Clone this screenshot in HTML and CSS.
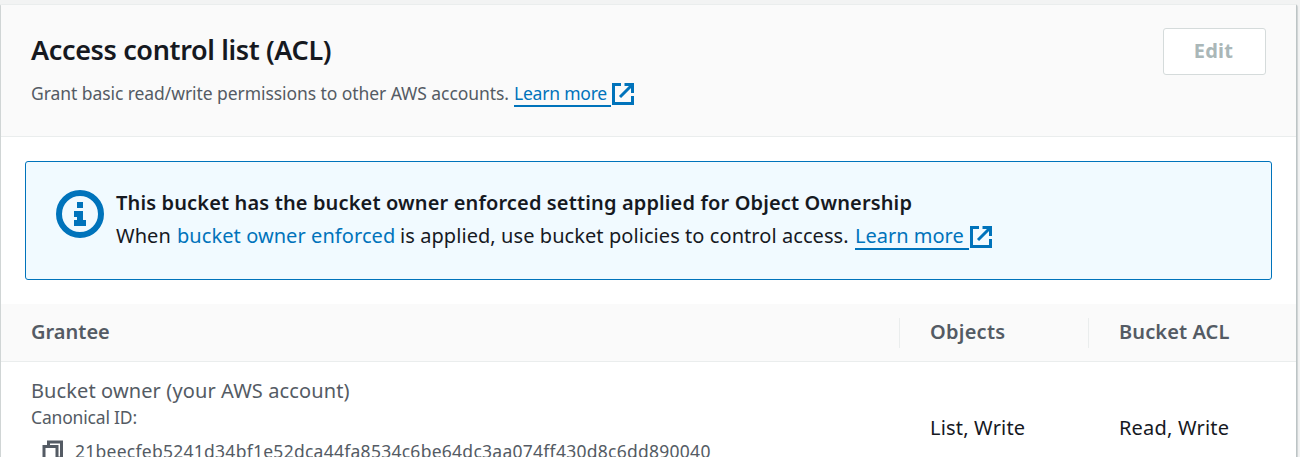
FILE: index.html
```html
<!DOCTYPE html>
<html lang="en">
<head>
<meta charset="utf-8">
<title>Access control list</title>
<link rel="stylesheet" href="styles.css">
</head>
<body>
<main class="panel">
  <header class="panel-header">
    <div>
      <h2 class="title">Access control list (ACL)</h2>
      <p class="description"><span class="description-text">Grant basic read/write permissions to other AWS accounts.</span><a class="link link-small"><span class="link-text">Learn more</span><svg class="external" viewBox="0 0 22 22"><path d="M9 1.5H1.5v19h19V13M12.5 1.5h8V10M20 2 8 14"/></svg></a></p>
    </div>
    <button class="edit" disabled>Edit</button>
  </header>
  <section class="alert">
    <svg class="info" viewBox="0 0 48 48"><circle cx="24" cy="24" r="21"/><path d="M21 12h6v6h-6zM18 21h9v9h3v6H18v-6h3v-3h-3z"/></svg>
    <div>
      <div class="alert-title">This bucket has the bucket owner enforced setting applied for Object Ownership</div>
      <div class="alert-body"><span class="seg-when">When</span><a class="plain-link">bucket owner enforced</a><span class="seg-policy">is applied, use bucket policies to control access.</span><a class="link link-large"><span class="link-text">Learn more</span><svg class="external" viewBox="0 0 22 22"><path d="M9 1.5H1.5v19h19V13M12.5 1.5h8V10M20 2 8 14"/></svg></a></div>
    </div>
  </section>
  <section class="table">
    <div class="row head">
      <div class="cell">Grantee</div>
      <div class="cell divided objects">Objects</div>
      <div class="cell divided acl">Bucket ACL</div>
    </div>
    <div class="row">
      <div class="cell grantee">
        <div class="owner">Bucket owner (your AWS account)</div>
        <div class="canonical">Canonical ID:</div>
        <div class="id-line"><svg class="copy" viewBox="0 0 22 24"><path d="M6.5 5V2h13v16h-4"/><path d="M2 6.5h13V22H2z"/></svg><span class="id">21beecfeb5241d34bf1e52dca44fa8534c6be64dc3aa074ff430d8c6dd890040</span></div>
      </div>
      <div class="cell value">List, Write</div>
      <div class="cell value">Read, Write</div>
    </div>
  </section>
</main>
</body>
</html>
```

FILE: styles.css
```css
* { box-sizing: border-box; }
body {
  margin: 0;
  height: 457px;
  overflow: hidden;
  padding: 4px 3px 0 0;
  background: #f2f3f3;
  color: #16191f;
  font: 20px/33px "Noto Sans", "Open Sans", sans-serif;
}
.panel {
  height: 453px;
  overflow: hidden;
  background: #fff;
  border: 1px solid #d0d5d5;
  border-bottom: 0;
  border-top-color: #eaeded;
  border-right-color: #bcc4c5;
  box-shadow: 1px 1px 1px rgba(0, 28, 36, .15);
  border-radius: 2px 2px 0 0;
}
.panel-header {
  height: 132px;
  display: flex;
  justify-content: space-between;
  align-items: flex-start;
  padding: 23px 30px 0;
  background: #fafafa;
  border-bottom: 1px solid #eaeded;
}
.title {
  margin: 5px 0 12px;
  font-size: 27px;
  line-height: 34px;
  font-weight: 600;
  letter-spacing: -.36px;
  white-space: nowrap;
}
.description {
  margin: 0;
  display: flex;
  font-size: 17.5px;
  line-height: 28px;
  letter-spacing: -.07px;
  color: #545b64;
  white-space: nowrap;
}
.description-text { width: 483px; }
.link { display: flex; color: #0073bb; }
.link-text { border-bottom: 2px solid #0073bb; }
.link-small .link-text { width: 97px; height: 28px; letter-spacing: -.22px; }
.link-large .link-text { width: 114px; height: 31px; }
.external {
  width: 22px;
  height: 22px;
  fill: none;
  stroke: #0073bb;
  stroke-width: 3;
}
.link-small .external { margin: 4px 0 0 1px; }
.link-large .external { margin: 7px 0 0 1px; }
.edit {
  width: 103px;
  height: 47px;
  padding: 0 2px 2px 0;
  border: 1px solid #d5dbdb;
  border-radius: 3px;
  background: #fff;
  color: #aab7b8;
  font: 700 20px/42px "Noto Sans", sans-serif;
  letter-spacing: .2px;
}
.alert {
  height: 119px;
  margin: 24px 24px;
  padding: 24px 30px;
  display: flex;
  gap: 12px;
  border: 1px solid #0073bb;
  border-radius: 3px;
  background: #f1faff;
  white-space: nowrap;
}
.info { width: 48px; height: 48px; margin-top: 4px; fill: #0073bb; }
.info circle { fill: none; stroke: #0073bb; stroke-width: 6; }
.alert-title { font-weight: 600; letter-spacing: .135px; }
.alert-body { display: flex; letter-spacing: .07px; }
.seg-when { width: 61px; }
.plain-link { width: 223px; color: #0073bb; }
.seg-policy { width: 455px; }
.link-large { letter-spacing: 0; }
.row { display: grid; grid-template-columns: 898px 189px 1fr; }
.head {
  height: 58px;
  align-items: center;
  background: #fafafa;
  border-bottom: 1px solid #eaeded;
  color: #545b64;
  font-weight: 600;
}
.cell { padding-left: 30px; white-space: nowrap; }
.head .cell { height: 30px; line-height: 27px; }
.divided { border-left: 1px solid #eaeded; }
.objects { letter-spacing: .25px; }
.acl { letter-spacing: .1px; }
.grantee { padding-top: 15px; color: #545b64; }
.owner { line-height: 28px; letter-spacing: .11px; }
.canonical { font-size: 17.5px; line-height: 24px; letter-spacing: -.18px; }
.id-line {
  display: flex;
  margin-top: 8px;
  padding-left: 11px;
  font-size: 17.5px;
  line-height: 28px;
  letter-spacing: .265px;
}
.copy { width: 22px; height: 24px; margin: 3px 11px 0 0; fill: none; stroke: #545b64; stroke-width: 3; }
.value { padding: 49px 0 0 31px; letter-spacing: .18px; }
```
